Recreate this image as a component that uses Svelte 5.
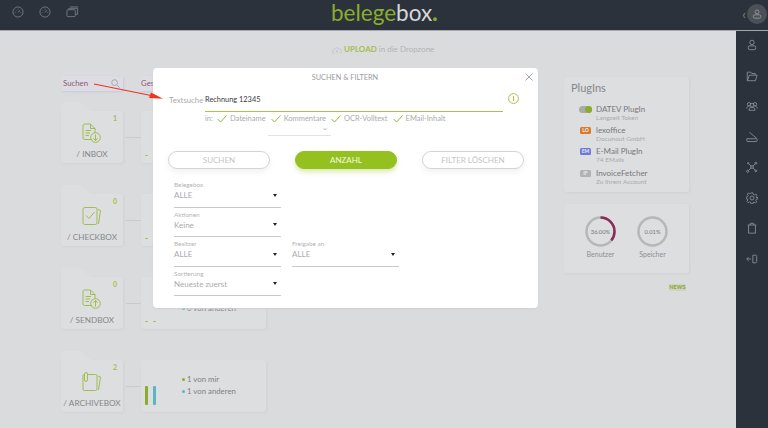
<script>
	const boxes = [
		{ name: "/ INBOX", count: 1, icon: "in", lines: [], chart: 1 },
		{ name: "/ CHECKBOX", count: 0, icon: "check", lines: [], chart: 1 },
		{ name: "/ SENDBOX", count: 0, icon: "out", lines: ["0 von mir", "0 von anderen"], chart: 1 },
		{ name: "/ ARCHIVEBOX", count: 2, icon: "arch", lines: ["1 von mir", "1 von anderen"], chart: 19 },
	];
	const plugins = [
		{ tag: "toggle", name: "DATEV PlugIn", sub: "Langzeit Token" },
		{ tag: "LO", cls: "orange", name: "lexoffice", sub: "Docunout GmbH" },
		{ tag: "EM", cls: "blue", name: "E-Mail PlugIn", sub: "74 EMails" },
		{ tag: "IF", cls: "grey", name: "InvoiceFetcher", sub: "Zu Ihrem Account" },
	];
	const targets = ["Dateiname", "Kommentare", "OCR-Volltext", "EMail-Inhalt"];
	const fields = [
		{ label: "Belegebox", value: "ALLE" },
		{ label: "Aktionen", value: "Keine" },
		{ label: "Besitzer", value: "ALLE", second: { label: "Freigabe an", value: "ALLE" } },
		{ label: "Sortierung", value: "Neueste zuerst" },
	];
</script>

<div class="page">
	<header class="topbar">
		<div class="top-icons">
			<svg width="12" height="12" viewBox="0 0 13 13"><circle cx="6.5" cy="6.5" r="5.5" /><path d="M6.5 7l2-2.5M3 7h.8M9.2 7h.8M6.5 3v.8M4 4.4l.5.5" /></svg>
			<svg width="12" height="12" viewBox="0 0 13 13"><circle cx="6.5" cy="6.5" r="5.5" /><path d="M6.5 7l2-2.5M3 7h.8M9.2 7h.8M6.5 3v.8M4 4.4l.5.5" /></svg>
			<svg width="13" height="12" viewBox="0 0 14 13"><rect x="1" y="4" width="9" height="7.5" rx="1" /><path d="M3 4V2.500h9.500V9H10M4.500 1h8.500" /></svg>
		</div>
		<div class="logo">belege<span>box</span><b>.</b></div>
		<div class="me">
			<span class="chev">‹</span>
			<span class="avatar">
				<svg width="10" height="10" viewBox="0 0 12 12"><circle cx="6" cy="3.500" r="2.300" /><rect x="1.500" y="7" width="9" height="4" rx="1.800" /></svg>
			</span>
		</div>
	</header>

	<div class="body">
		<main class="main">
			<p class="upload">
				<svg width="10" height="8" viewBox="0 0 12 9"><path d="M3 8.500H2.500a2 2 0 0 1 0-4 3.200 3.200 0 0 1 6-1 2.500 2.500 0 0 1 1 5H9M6 8.500V5M4.800 6.200L6 5l1.200 1.200" /></svg>
				<strong>UPLOAD</strong><span>in die Dropzone</span>
			</p>
			<div class="columns">
				<section class="boxes">
					<div class="filters">
						<div class="search">Suchen
							<svg width="9" height="9" viewBox="0 0 10 10"><circle cx="4" cy="4" r="3.200" /><path d="M6.500 6.500L9.500 9.500" /></svg>
						</div>
						<div class="search second">Gesamt</div>
					</div>
					{#each boxes as box}
						<div class="row">
							<div class="folder">
								<span class="tab"></span>
								<span class="count">{box.count}</span>
								<svg class="box-icon" width="20" height="20" viewBox="0 0 20 20">
									{#if box.icon === "in" || box.icon === "out"}
										<path d="M10 16.500H2.500A1.500 1.500 0 0 1 1 15V2.500A1.500 1.500 0 0 1 2.500 1H8.500l4.500 4.500V10M8.500 1v4.500H13M3.500 7.500h5.500M3.500 10h4.500M3.500 12.500h3.500" />
										<circle cx="13.500" cy="14.500" r="4.800" />
										{#if box.icon === "in"}
											<path d="M13.500 11.500v6M11.300 15.300l2.200 2.200 2.200-2.200" />
										{:else}
											<path d="M13.500 17.500v-6M11.300 13.700l2.200-2.200 2.200 2.200" />
										{/if}
									{:else if box.icon === "check"}
										<rect x="1" y="1.500" width="14" height="17" rx="1.800" />
										<path d="M4 9.500l3 3 5.500-6.500M16 3.500l2.500 1-2 13.500" />
									{:else}
										<path d="M5.500 2.500h8a1.500 1.500 0 0 1 1.500 1.500v13a1.500 1.500 0 0 1-1.500 1.500H2.500A1.500 1.500 0 0 1 1 17V4a1.500 1.500 0 0 1 1.500-1.500M16 4l2.500 1-2 13M2.500 2a1.500 1.500 0 0 1 3 0v6a1.500 1.500 0 0 1-3 0z" />
									{/if}
								</svg>
								<span class="box-name">{box.name}</span>
							</div>
							<span class="link"></span>
							<div class="detail">
								<span class="bars" class:flat={box.chart === 1}>
									<i class="green" style="height: {box.chart}px"></i>
									<i class="teal" style="height: {box.chart}px"></i>
								</span>
								{#if box.lines.length}
									<ul>
										{#each box.lines as line, i}
											<li><i class={i === 0 ? "green" : "teal"}></i>{line}</li>
										{/each}
									</ul>
								{/if}
							</div>
						</div>
					{/each}
				</section>

				<aside class="side">
					<div class="panel plugins">
						<h3>PlugIns</h3>
						{#each plugins as p}
							<div class="plugin">
								<span class="tag-wrap">
									{#if p.tag === "toggle"}
										<span class="toggle"><i></i></span>
									{:else}
										<span class="tag {p.cls}">{p.tag}</span>
									{/if}
								</span>
								<div>
									<div class="p-name">{p.name}</div>
									<div class="p-sub">{p.sub}</div>
								</div>
							</div>
						{/each}
					</div>
					<div class="panel gauges">
						<div class="gauge">
							<svg width="31" height="31" viewBox="0 0 31 31">
								<circle class="ring" cx="15.500" cy="15.500" r="14" />
								<circle class="arc" cx="15.500" cy="15.500" r="14" pathLength="100" stroke-dasharray="36 100" transform="rotate(-90 15.500 15.500)" />
								<text x="15.500" y="17.500">36.00%</text>
							</svg>
							<span>Benutzer</span>
						</div>
						<div class="gauge">
							<svg width="31" height="31" viewBox="0 0 31 31">
								<circle class="ring" cx="15.500" cy="15.500" r="14" />
								<text x="15.500" y="17.500">0.01%</text>
							</svg>
							<span>Speicher</span>
						</div>
					</div>
					<span class="news">NEWS</span>
				</aside>
			</div>
		</main>

		<nav class="rail">
			<svg viewBox="0 0 14 14"><circle cx="7" cy="4" r="2.600" /><rect x="2.500" y="8" width="9" height="4.500" rx="2" /></svg>
			<svg viewBox="0 0 14 14"><path d="M1.500 12.500V2.500h4l1.200 1.500h4v2M1.500 12.500h9.500l2-6.500H4z" /></svg>
			<svg viewBox="0 0 14 14"><circle cx="3.500" cy="5" r="2" /><circle cx="10.500" cy="5" r="2" /><circle cx="7" cy="6" r="2.200" /><path d="M.8 10c0-2 1.500-2.800 3-2.800M13.200 10c0-2-1.500-2.800-3-2.800M3.500 12c0-2.500 1.500-3.500 3.500-3.500s3.500 1 3.500 3.500z" /></svg>
			<svg viewBox="0 0 14 14"><path d="M4 1.500L12.500 8.500M1 9h11a1 1 0 0 1 1 1v1.500a.800.800 0 0 1-.800.800H1.800a.800.800 0 0 1-.800-.800V9z" /></svg>
			<svg viewBox="0 0 14 14"><circle cx="7" cy="7" r="1.600" /><circle cx="11.500" cy="2.500" r="1.100" /><circle cx="2.500" cy="2.500" r=".800" /><circle cx="2" cy="12" r="1.300" /><circle cx="11.500" cy="11.500" r="1.100" /><path d="M8 6l2.700-2.700M6 6L3 3M6 8l-3 3M8 8l2.700 2.700" /></svg>
			<svg viewBox="0 0 14 14"><circle cx="7" cy="7" r="2.300" /><path d="M6 1h2l.4 1.800 1.500.7 1.600-1 1.400 1.400-1 1.600.7 1.500L14 6v2l-1.800.4-.7 1.500 1 1.600-1.400 1.400-1.600-1-1.500.7L8 14H6l-.4-1.800-1.500-.7-1.600 1L1.100 11l1-1.600-.7-1.500L0 8V6l1.800-.4.700-1.500-1-1.600L2.900 1.100l1.600 1 1.100-.5z" /></svg>
			<svg viewBox="0 0 14 14"><path d="M2 3.500h10M5 3.500V1.500h4v2M3 3.500v9.500h8V3.500" /></svg>
			<svg viewBox="0 0 14 14"><path d="M6 7H1M3 4.800L.8 7 3 9.200M8 2.500h3a1.500 1.500 0 0 1 1.500 1.500v6a1.500 1.500 0 0 1-1.500 1.500H8z" /></svg>
		</nav>
	</div>

	<div class="modal">
		<h2>SUCHEN &amp; FILTERN</h2>
		<svg class="close" width="8" height="8" viewBox="0 0 8 8"><path d="M.5.500l7 7M7.500.500l-7 7" /></svg>
		<div class="text-row">
			<label for="q">Textsuche</label>
			<div class="input-line"><input id="q" value="Rechnung 12345" /></div>
			<svg class="info" width="11" height="11" viewBox="0 0 11 11"><circle cx="5.500" cy="5.500" r="4.900" /><path d="M5.500 3v5" /></svg>
		</div>
		<div class="in-row">
			<span class="in">in:</span>
			{#each targets as t}
				<span class="target">
					<svg width="10" height="8" viewBox="0 0 10 8"><path d="M.5 4l3 3L9.500.500" /></svg>
					{t}
				</span>
			{/each}
		</div>
		<div class="mini-select"><span>⌄</span></div>
		<div class="buttons">
			<button>SUCHEN</button>
			<button class="primary">ANZAHL</button>
			<button>FILTER LÖSCHEN</button>
		</div>
		<div class="fields">
			{#each fields as f}
				<div class="field">
					<small>{f.label}</small>
					<div class="value">{f.value}<i></i></div>
				</div>
				{#if f.second}
					<div class="field">
						<small>{f.second.label}</small>
						<div class="value">{f.second.value}<i></i></div>
					</div>
				{:else}
					<div></div>
				{/if}
			{/each}
		</div>
	</div>

	<svg class="arrow" width="72" height="18" viewBox="0 0 72 18">
		<path d="M1 1L58 12.500" />
		<polygon points="70,15.700 58,9.500 56,15" />
	</svg>
</div>

<style>
	:global(body) {
		margin: 0;
		background: #dadbdd;
	}
	.page {
		position: relative;
		width: 768px;
		height: 428px;
		overflow: hidden;
		display: flex;
		flex-direction: column;
		font-family: Lato, "Open Sans", sans-serif;
		color: #8e8f92;
	}
	.topbar {
		height: 31px;
		flex: none;
		background: #2b323b;
		border-bottom: 1px solid #a5a7aa;
		box-sizing: border-box;
		display: flex;
		align-items: center;
		justify-content: space-between;
		padding: 0 1px 0 12px;
		position: relative;
	}
	.top-icons {
		display: flex;
		gap: 15px;
		margin-top: -7px;
	}
	.top-icons svg {
		fill: none;
		stroke: #757a80;
		stroke-width: 1;
	}
	.logo {
		position: absolute;
		left: 331px;
		top: 0;
		font-size: 22.500px;
		line-height: 26px;
		font-weight: 400;
		color: #8bac2c;
	}
	.logo span {
		color: #d6d7d9;
	}
	.logo b {
		color: #8bac2c;
		font-weight: 900;
	}
	.me {
		display: flex;
		align-items: center;
		gap: 1px;
		margin-top: -3px;
	}
	.chev {
		color: #7d8186;
		font-size: 13px;
	}
	.avatar {
		width: 20px;
		height: 20px;
		border-radius: 50%;
		background: #4b5157;
		display: flex;
		align-items: center;
		justify-content: center;
	}
	.avatar svg {
		fill: none;
		stroke: #9a9da1;
	}
	.body {
		flex: 1;
		display: flex;
		min-height: 0;
	}
	.main {
		flex: 1;
		min-width: 0;
	}
	.rail {
		width: 32px;
		flex: none;
		background: #2b323b;
		display: flex;
		flex-direction: column;
		align-items: center;
		padding-top: 8px;
		gap: 18.500px;
		box-sizing: border-box;
	}
	.rail svg {
		width: 12px;
		height: 12px;
		fill: none;
		stroke: #8e9196;
		stroke-width: 1;
	}
	.upload {
		margin: 13px 0 0;
		padding-left: 332px;
		font-size: 8px;
		line-height: 11px;
		color: #b3b4b6;
		display: flex;
		align-items: center;
		gap: 2px;
		white-space: pre;
	}
	.upload svg {
		fill: none;
		stroke: #bdbec0;
		stroke-width: .8;
	}
	.upload strong {
		color: #a3bf50;
		font-weight: 700;
	}
	.columns {
		display: flex;
		justify-content: space-between;
		padding: 21px 47px 0 61px;
	}
	.filters {
		display: flex;
		gap: 16px;
		margin-bottom: 20px;
	}
	.search {
		width: 62px;
		height: 15px;
		flex: none;
		background: #dddce2;
		box-shadow: 1px 1px 2px #c9c8dd;
		border-radius: 2px;
		font-size: 7.800px;
		line-height: 15px;
		color: #8d5a73;
		padding-left: 2px;
		box-sizing: border-box;
		display: flex;
		justify-content: space-between;
		align-items: center;
		padding-right: 3px;
	}
	.search svg {
		fill: none;
		stroke: #a0a1a4;
	}
	.row {
		display: flex;
		align-items: center;
		margin-bottom: 31px;
		height: 52px;
		width: 205px;
	}
	.folder {
		width: 62px;
		height: 52px;
		flex: none;
		position: relative;
		background: #dddee0;
		border-radius: 0 3px 3px 3px;
		box-shadow: 1px 1px 3px #d0d1d3;
		display: flex;
		flex-direction: column;
		align-items: center;
		justify-content: flex-end;
		padding-bottom: 4px;
		box-sizing: border-box;
	}
	.tab {
		position: absolute;
		left: 0;
		top: -9px;
		width: 30px;
		height: 9px;
		background: #dddee0;
		clip-path: polygon(0 100%, 0 45%, 6% 20%, 18% 0, 62% 0, 72% 25%, 100% 100%);
	}
	.count {
		position: absolute;
		right: 6px;
		top: 3px;
		font-size: 7px;
		font-weight: 700;
		color: #a3bf50;
	}
	.box-icon {
		fill: none;
		stroke: #a0bd52;
		stroke-width: 1;
		margin-bottom: 6px;
	}
	.box-name {
		font-size: 8.200px;
		line-height: 10px;
		color: #85878a;
		white-space: nowrap;
	}
	.link {
		width: 15px;
		height: 1px;
		margin-left: 3px;
		background: #c9cacc;
		flex: none;
	}
	.detail {
		width: 125px;
		height: 52px;
		flex: none;
		background: #dddee0;
		border-radius: 3px;
		box-shadow: 1px 1px 3px #d0d1d3;
		margin-right: -200px;
		display: flex;
		align-items: center;
		padding-left: 4px;
		box-sizing: border-box;
	}
	.bars {
		display: flex;
		align-items: flex-end;
		gap: 5px;
		width: 37px;
		flex: none;
		align-self: flex-end;
		margin-bottom: 7px;
	}
	.bars i {
		display: block;
		width: 3px;
		border-radius: 1px;
	}
	.bars.flat i {
		background: #a9c05c;
	}
	.green {
		background: #8bac2c;
	}
	.teal {
		background: #5bb5c5;
	}
	.detail ul {
		list-style: none;
		margin: -2px 0 0;
		padding: 0;
		font-size: 7.800px;
		line-height: 12px;
		color: #7f8083;
	}
	.detail li {
		display: flex;
		align-items: center;
		gap: 2px;
	}
	.detail li i {
		width: 3px;
		height: 3px;
		border-radius: 50%;
	}
	.side {
		width: 125px;
		margin-top: 1px;
		display: flex;
		flex-direction: column;
		gap: 12px;
	}
	.panel {
		background: #dddee0;
		border-radius: 3px;
		box-shadow: 1px 1px 3px #d0d1d3;
	}
	.plugins {
		height: 115px;
		padding: 4px 0 0 7px;
		box-sizing: border-box;
	}
	.plugins h3 {
		margin: 0 0 9px;
		font-size: 11px;
		line-height: 14px;
		font-weight: 400;
		color: #85878a;
	}
	.plugin {
		display: flex;
		gap: 4px;
		height: 21.200px;
		margin-left: 8px;
	}
	.tag-wrap {
		width: 13px;
		display: flex;
		justify-content: center;
		padding-top: 2px;
		height: 7px;
	}
	.toggle {
		width: 13px;
		height: 7px;
		background: #a9aaac;
		border-radius: 4px;
		position: relative;
	}
	.toggle i {
		position: absolute;
		right: 0;
		top: 0;
		width: 7px;
		height: 7px;
		border-radius: 50%;
		background: #8bac2c;
	}
	.tag {
		width: 11px;
		height: 7px;
		border-radius: 1.500px;
		font-size: 5px;
		line-height: 7px;
		font-weight: 700;
		text-align: center;
		color: #eee;
	}
	.orange { background: #d97b2b; }
	.blue { background: #6c78dc; }
	.grey { background: #b1b2b4; }
	.p-name {
		font-size: 8px;
		line-height: 10px;
		color: #77787b;
	}
	.p-sub {
		font-size: 6.500px;
		line-height: 8px;
		color: #a9aaac;
	}
	.gauges {
		height: 69px;
		display: flex;
		justify-content: center;
		gap: 21px;
		padding-top: 12px;
		box-sizing: border-box;
	}
	.gauge {
		display: flex;
		flex-direction: column;
		align-items: center;
		gap: 3px;
		font-size: 7px;
		line-height: 9px;
		color: #8e8f92;
		width: 31px;
	}
	.ring {
		fill: none;
		stroke: #b6b7b9;
		stroke-width: 2.500;
	}
	.arc {
		fill: none;
		stroke: #8a2b58;
		stroke-width: 2.500;
	}
	.gauge text {
		font-size: 5.800px;
		fill: #77787b;
		text-anchor: middle;
	}
	.news {
		align-self: flex-end;
		margin: -1px 3px 0 0;
		font-size: 5.500px;
		line-height: 7px;
		font-weight: 900;
		color: #8bac2c;
		background: #d0d1c9;
		padding: 0 .5px;
	}
	.modal {
		position: absolute;
		left: 153px;
		top: 68px;
		width: 385px;
		height: 240px;
		background: #fff;
		border-radius: 4px;
		box-shadow: 0 1px 2px #cfd0d2;
		padding-top: 5px;
		box-sizing: border-box;
	}
	.modal h2 {
		margin: 0;
		font-size: 7.300px;
		line-height: 10px;
		font-weight: 400;
		color: #9a9b9d;
		text-align: center;
		padding-right: 1px;
	}
	.close {
		position: absolute;
		right: 5px;
		top: 5px;
		stroke: #8e8f92;
		fill: none;
		stroke-width: .8;
	}
	.text-row {
		display: flex;
		align-items: flex-end;
		margin: 10px 0 0 16px;
		height: 18px;
		position: relative;
	}
	.text-row label {
		width: 36px;
		font-size: 7.800px;
		line-height: 10px;
		color: #a9aaac;
		padding-bottom: 6px;
	}
	.input-line {
		width: 298px;
		height: 18px;
		border-bottom: 1px solid #a6c445;
		margin-bottom: -1px;
	}
	.input-line input {
		border: 0;
		outline: 0;
		padding: 0;
		background: none;
		width: 100%;
		height: 11px;
		margin-top: 1px;
		display: block;
		font: 400 7.400px/11px Lato, sans-serif;
		color: #3a3b3d;
	}
	.info {
		margin: 0 0 7px 5px;
		fill: none;
		stroke: #a6c445;
	}
	.in-row {
		display: flex;
		align-items: center;
		margin: 3px 0 0 52px;
		height: 9px;
		font-size: 7.500px;
		color: #aaabad;
		white-space: nowrap;
	}
	.in {
		margin-right: 4px;
	}
	.target {
		display: flex;
		align-items: center;
		gap: 3px;
		margin-right: 5px;
	}
	.target svg {
		fill: none;
		stroke: #8ec02a;
	}
	.mini-select {
		width: 63px;
		height: 12px;
		margin: 1px 0 0 115px;
		border-bottom: 1px solid #e3e3e3;
		text-align: right;
		font-size: 7px;
		line-height: 7px;
		color: #a0a1a3;
		padding-right: 3px;
		box-sizing: border-box;
	}
	.buttons {
		display: flex;
		gap: 25px;
		margin: 15px 0 0 15px;
	}
	.buttons button {
		width: 102px;
		height: 18px;
		padding: 0;
		border: 1px solid #d4d4d4;
		border-radius: 9px;
		background: #fff;
		box-shadow: 0 3px 7px rgba(0, 0, 0, .06);
		font: 400 8px/16px Lato, sans-serif;
		color: #c4c5c7;
	}
	.buttons .primary {
		background: #94c11f;
		border-color: #94c11f;
		color: #f4f8e6;
		box-shadow: 0 3px 5px rgba(148, 193, 31, .35);
	}
	.fields {
		display: grid;
		grid-template-columns: 107px 107px;
		column-gap: 11px;
		row-gap: 3px;
		margin: 12px 0 0 21px;
	}
	.field {
		height: 26.500px;
		border-bottom: 1px solid #c9c9c9;
		box-sizing: border-box;
	}
	.field small {
		display: block;
		font-size: 6.400px;
		line-height: 8px;
		color: #b3b4b6;
	}
	.value {
		display: flex;
		justify-content: space-between;
		align-items: center;
		font-size: 8px;
		line-height: 12px;
		color: #aaabad;
		padding-right: 4px;
	}
	.value i {
		border-left: 2.500px solid transparent;
		border-right: 2.500px solid transparent;
		border-top: 3px solid #222;
	}
	.arrow {
		position: absolute;
		left: 93px;
		top: 83px;
	}
	.arrow path {
		stroke: #f0321e;
		stroke-width: 1.200;
		fill: none;
	}
	.arrow polygon {
		fill: #f0321e;
	}
</style>
